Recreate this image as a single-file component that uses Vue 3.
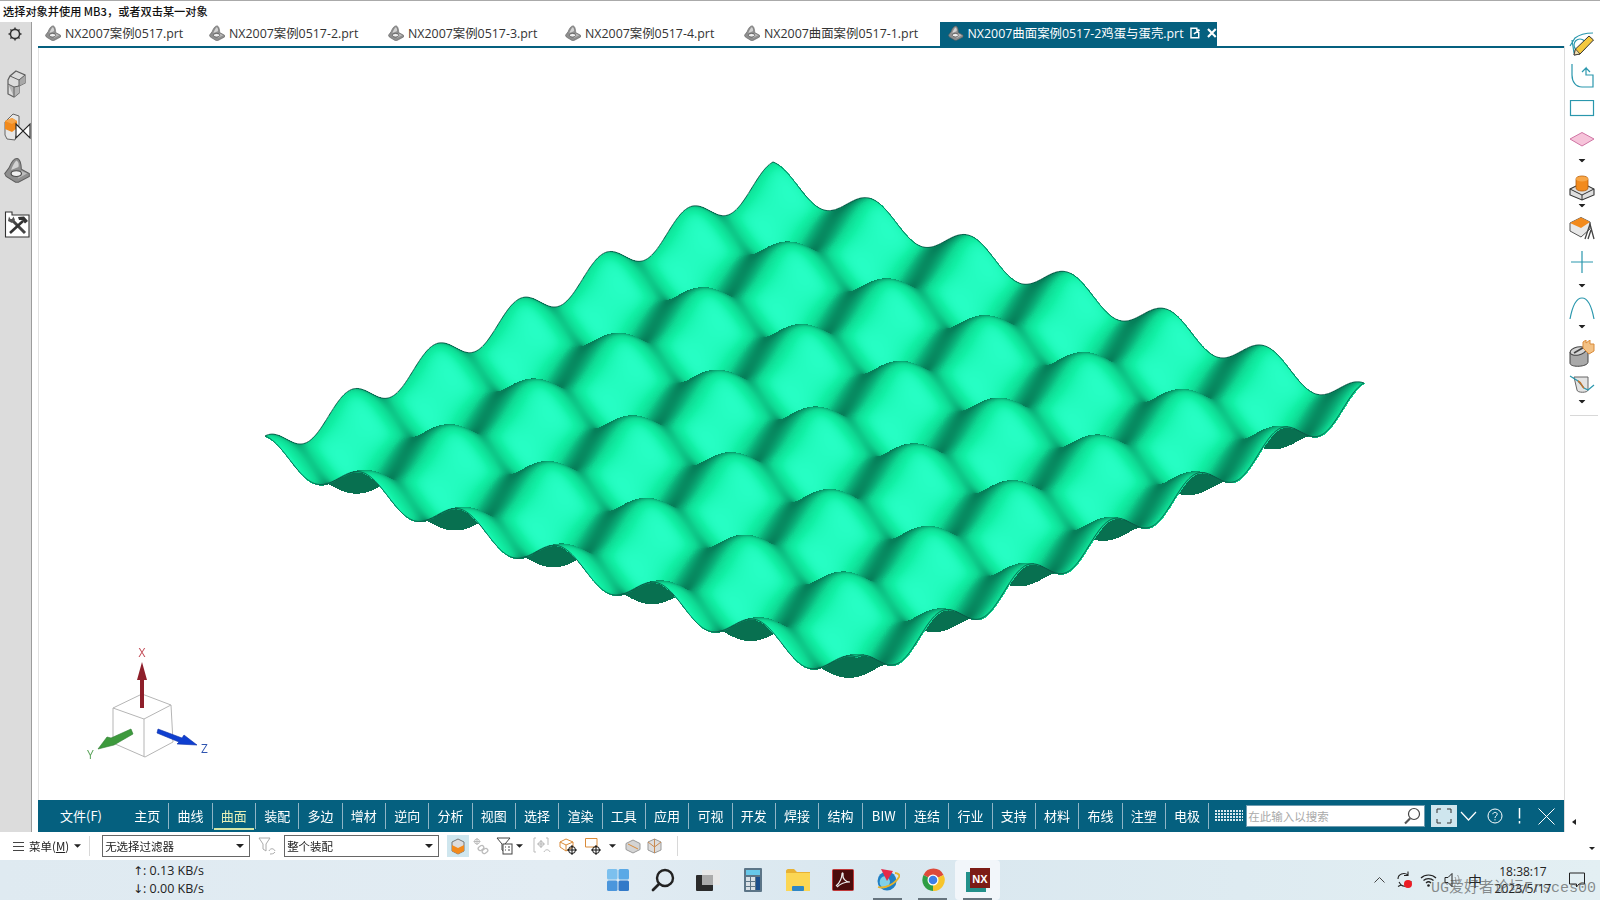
<script setup>
import { ref, onMounted } from 'vue'

const tabs = [
  { name: 'NX2007案例0517.prt', width: 164 },
  { name: 'NX2007案例0517-2.prt', width: 179 },
  { name: 'NX2007案例0517-3.prt', width: 177 },
  { name: 'NX2007案例0517-4.prt', width: 179 },
  { name: 'NX2007曲面案例0517-1.prt', width: 196 }
]
const ribbon = ['主页', '曲线', '曲面', '装配', '多边', '增材', '逆向', '分析', '视图', '选择', '渲染', '工具', '应用', '可视', '开发', '焊接', '结构', 'BIW', '连结', '行业', '支持', '材料', '布线', '注塑', '电极']

const surface = ref(null)

// colour ramp of the shaded surface, [light amount, r, g, b]
const ramp = [
  [0.2, 6, 128, 90],
  [0.48, 10, 178, 122],
  [0.66, 14, 216, 146],
  [0.86, 17, 240, 165],
  [1, 40, 255, 198]
]

function shade(lit) {
  if (lit <= ramp[0][0]) return ramp[0]
  for (let i = 1; i < ramp.length; i++) {
    if (lit <= ramp[i][0]) {
      const a = ramp[i - 1]
      const b = ramp[i]
      const m = (lit - a[0]) / (b[0] - a[0])
      return [0, a[1] + (b[1] - a[1]) * m, a[2] + (b[2] - a[2]) * m, a[3] + (b[3] - a[3]) * m]
    }
  }
  return ramp[ramp.length - 1]
}

// egg carton surface, s runs left corner -> far corner, t runs left corner -> near corner
function drawSurface() {
  const canvas = surface.value
  const W = canvas.width
  const H = canvas.height
  const ctx = canvas.getContext('2d')
  const img = ctx.createImageData(W, H)
  const px = img.data
  for (let i = 0; i < px.length; i += 4) {
    px[i] = 255; px[i + 1] = 255; px[i + 2] = 255; px[i + 3] = 255
  }

  const L = [265 - 39, 436 - 48]
  const E1 = [508, -274]
  const E2 = [591, 221]
  const amp = 14.5
  const side = 779
  const e1 = [508 / side, -274 / side, -524 / side]
  const e2 = [591 / side, 221 / side, 457 / side]
  const N = [-0.0155, -0.892, 0.451]
  const k = (12 * Math.PI) / side
  const ampW = amp / 0.892
  const steps = 2200
  const light = [0.27, -0.25, 0.93]

  const c = new Float32Array(steps + 1)
  const d = new Float32Array(steps + 1)
  for (let i = 0; i <= steps; i++) {
    const a = (12 * Math.PI * i) / steps
    c[i] = Math.cos(a)
    d[i] = -ampW * k * Math.sin(a)
  }

  for (let i = steps; i >= 0; i--) {
    const s = i / steps
    for (let j = 0; j <= steps; j++) {
      const t = j / steps
      const z = amp * (c[i] + c[j] - 2)
      const x = Math.round(L[0] + s * E1[0] + t * E2[0])
      const y = Math.round(L[1] + s * E1[1] + t * E2[1] - z)
      if (x < 0 || y < 0 || x >= W || y >= H) continue
      const ds = d[i]
      const dt = d[j]
      const nx = N[0] - ds * e1[0] - dt * e2[0]
      const ny = N[1] - ds * e1[1] - dt * e2[1]
      const nz = N[2] - ds * e1[2] - dt * e2[2]
      const len = Math.hypot(nx, ny, nz)
      const o = (y * W + x) * 4
      // facing away from the viewer: the underside
      if (nz < 0) {
        px[o] = 8; px[o + 1] = 112; px[o + 2] = 80
        continue
      }
      const col = shade((nx * light[0] + ny * light[1] + nz * light[2]) / len)
      px[o] = col[1]; px[o + 1] = col[2]; px[o + 2] = col[3]
    }
  }
  ctx.putImageData(img, 0, 0)

  // boundary curves
  ctx.strokeStyle = '#0a5a48'
  ctx.lineWidth = 1
  const edge = (ax, ay, bx, by) => {
    ctx.beginPath()
    for (let i = 0; i <= 720; i++) {
      const u = i / 720
      const s = ax + (bx - ax) * u
      const t = ay + (by - ay) * u
      const z = amp * (Math.cos(12 * Math.PI * s) + Math.cos(12 * Math.PI * t) - 2)
      const x = L[0] + s * E1[0] + t * E2[0]
      const y = L[1] + s * E1[1] + t * E2[1] - z
      if (i === 0) ctx.moveTo(x, y)
      else ctx.lineTo(x, y)
    }
    ctx.stroke()
  }
  edge(0, 0, 1, 0)
  edge(1, 0, 1, 1)
  edge(0, 0, 0, 1)
  edge(0, 1, 1, 1)
}

onMounted(drawSurface)
</script>

<template>
  <div class="screen">
    <svg width="0" height="0" class="defs">
      <symbol id="part" viewBox="0 0 18 18">
        <path d="M9 1 C7 1 5 3.500 3.500 7.500 L0.500 11.500 L1.500 13.500 L8 17.500 L10 17.500 L17.500 13.500 V11.500 L12 8.500 C12 5 11 1 9 1 Z" fill="#8f8f8f" stroke="#5e5e5e" stroke-width=".7" />
        <path d="M8.500 2.500 C7 4 5.500 7 5 9 L10 7 C10.500 5 10 3 8.500 2.500 Z" fill="#d2d2d2" />
        <path d="M12 9.500 L16 11.500 L9.500 15 L11 12 Z" fill="#bcbcbc" />
        <ellipse cx="8.500" cy="11.500" rx="3.600" ry="2" fill="#efefef" stroke="#4c4c4c" stroke-width=".8" />
      </symbol>
      <symbol id="caret" viewBox="0 0 8 4">
        <path d="M0 0 H8 L4 4 Z" fill="#222" />
      </symbol>
    </svg>

    <div class="status">选择对象并使用 MB3，或者双击某一对象</div>

    <div class="work">
      <aside class="rail">
        <svg class="gear" width="16" height="16" viewBox="0 0 16 16">
          <circle cx="8" cy="8" r="4.600" fill="none" stroke="#333" stroke-width="1.600" />
          <path d="M8 1.500V4M8 12v2.500M1.500 8H4M12 8h2.500M3.400 3.400l1.700 1.700M10.900 10.900l1.700 1.700M3.400 12.600l1.700-1.700M10.900 5.100l1.700-1.700" stroke="#333" stroke-width="1.400" />
        </svg>
        <svg class="rail-icon" width="24" height="28" viewBox="0 0 24 28">
          <path d="M11 1 L20 5 V13 L14 16 V23 L9 27 L3 24 V10 L5 6 Z" fill="#dcdcdc" stroke="#5e5e5e" stroke-width="1.200" />
          <path d="M5 6 L14 10 L20 5 V13 L14 16 V10 Z" fill="#a8a8a8" />
          <path d="M3 14 L9 17 L14 16 V23 L9 27 Z" fill="#b5b5b5" />
          <path d="M5 6 L14 10 L20 5 M14 10 V16 M3 14 L9 17 L14 16 M9 17 V27" fill="none" stroke="#5e5e5e" stroke-width="1" />
        </svg>
        <svg class="rail-icon" width="27" height="28" viewBox="0 0 27 28">
          <path d="M9 1 L15 3 V12 L11 27 L3 26 L1 22 V9 Z" fill="#e6e6e6" stroke="#666" />
          <path d="M1 8 L8 5 L13 8 V15 L8 19 L1 16 Z" fill="#f28a1c" />
          <path d="M1 8 L8 5 L13 8 L8 11 Z" fill="#f6a54a" />
          <path d="M12 11 L26 25 V11 L12 25 Z" fill="#fff" stroke="#222" stroke-width="1.100" />
        </svg>
        <svg class="rail-icon" width="26" height="28" viewBox="0 0 26 28">
          <use href="#part" />
        </svg>
        <svg class="rail-icon tools-icon" width="26" height="30" viewBox="0 0 26 30">
          <path d="M1.500 4 H8 V7 H25 V29 H1.500 Z" fill="#fff" stroke="#333" stroke-width="1.100" />
          <path d="M8 12 L21 25" stroke="#444" stroke-width="3" />
          <path d="M5 8.500 L4 13 L8 15 L11 12 L9.500 8.500 L8 11 L6.500 11 Z" fill="#555" />
          <path d="M19 13 L6 25" stroke="#333" stroke-width="2.600" />
          <path d="M14 9 L20 8.500 L24 13 L21 15.500 L18 12 L15 12 Z" fill="#333" />
        </svg>
      </aside>

      <main class="main">
        <div class="tabs">
          <div v-for="tab in tabs" :key="tab.name" class="tab" :style="{ width: tab.width + 'px' }">
            <svg width="16" height="16"><use href="#part" /></svg>
            <span>{{ tab.name }}</span>
          </div>
          <div class="tab active">
            <svg width="16" height="16"><use href="#part" /></svg>
            <span>NX2007曲面案例0517-2鸡蛋与蛋壳.prt</span>
            <svg class="doc" width="11" height="12" viewBox="0 0 11 12">
              <path d="M1 1 H7 V3 H9 V11 H1 Z M4 7 L10 3" fill="none" stroke="#fff" stroke-width="1.500" />
            </svg>
            <svg class="close" width="10" height="10" viewBox="0 0 10 10">
              <path d="M1 1 L9 9 M9 1 L1 9" stroke="#fff" stroke-width="2.200" />
            </svg>
          </div>
        </div>

        <div class="viewport">
          <canvas ref="surface" class="surface" width="1525" height="752"></canvas>
          <svg class="triad" width="160" height="140" viewBox="70 630 160 140">
            <g fill="none" stroke="#b5b5b5" stroke-width="1">
              <path d="M142 694 L113 708 L144 719 L171 705 Z" />
              <path d="M113 708 V743 L145 757 L173 742 L171 705 M144 719 V757" />
            </g>
            <path d="M140 708 V680 L137 680 L142 662 L147 680 L144 680 V708 Z" fill="#8e1f2a" />
            <path d="M131 729 L133 734 L114 745 L98 749 L107 737 L111 738 Z" fill="#3d9a3d" stroke="#2c7c30" stroke-width=".6" />
            <path d="M158 729 L182 738 L184 735 L197 745 L177 744 L179 742 L157 733 Z" fill="#0f3fd0" stroke="#0a2fa8" stroke-width=".6" />
            <text x="138.500" y="657" class="axis" fill="#c24a55">X</text>
            <text x="87" y="759" class="axis" fill="#5aa35a">Y</text>
            <text x="201" y="753" class="axis" fill="#2f55b0">Z</text>
          </svg>
        </div>

        <nav class="ribbon">
          <div class="file">文件(F)</div>
          <div v-for="item in ribbon" :key="item" class="rib" :class="{ on: item === '曲面' }"><span>{{ item }}</span></div>
          <svg class="grip" width="28" height="12" viewBox="0 0 28 12">
            <pattern id="dots" width="3" height="3" patternUnits="userSpaceOnUse"><rect width="2" height="2" fill="#d8e8ee" /></pattern>
            <rect width="28" height="12" fill="url(#dots)" />
          </svg>
          <div class="search">
            <span>在此输入以搜索</span>
            <svg width="18" height="18" viewBox="0 0 18 18">
              <circle cx="11" cy="7" r="5.500" fill="#fff" stroke="#444" stroke-width="1.200" />
              <path d="M7 11.500 L2 16.500" stroke="#555" stroke-width="2.200" />
            </svg>
          </div>
          <div class="full">
            <svg width="16" height="16" viewBox="0 0 16 16">
              <path d="M1 5V1H5M11 1H15V5M15 11V15H11M5 15H1V11" fill="none" stroke="#333" stroke-width="1" />
            </svg>
          </div>
          <svg class="rb-chevron" width="17" height="12" viewBox="0 0 17 12"><path d="M1 2 L8.500 10 L16 2" fill="none" stroke="#fff" stroke-width="1.200" /></svg>
          <svg class="rb-help" width="16" height="16" viewBox="0 0 16 16">
            <circle cx="8" cy="8" r="7" fill="none" stroke="#fff" stroke-width="1" />
            <path d="M5.800 6.200 C6 3.800 10.200 3.800 10.200 6.200 C10.200 8 8 7.800 8 10 M8 11.200 V12.400" fill="none" stroke="#fff" stroke-width="1" />
          </svg>
          <svg class="rb-warn" width="3" height="16" viewBox="0 0 3 16"><path d="M1.500 0 V10.500 M1.500 13 V15.500" stroke="#fff" stroke-width="1.500" /></svg>
          <svg class="rb-close" width="17" height="17" viewBox="0 0 17 17"><path d="M0.500 0.500 L16.500 16.500 M16.500 0.500 L0.500 16.500" stroke="#fff" stroke-width="1" /></svg>
        </nav>
      </main>

      <aside class="tools">
        <svg width="36" height="31" viewBox="0 0 36 31">
          <path d="M6 14 L11 6 C16 2 22 1 29 1 M8 8 L10 21 H15" fill="none" stroke="#2a97ad" stroke-width="1.200" />
          <circle cx="16" cy="13" r="6" fill="none" stroke="#2a97ad" stroke-width="1.200" />
          <path d="M10 23 L11.500 17 L25 4 L29.500 8 L16 22 Z" fill="#f4c83e" stroke="#333" stroke-width="1" />
          <path d="M10 23 L11.500 17 L16 22 Z" fill="#f3e0b0" stroke="#333" stroke-width=".8" />
        </svg>
        <svg width="36" height="37" viewBox="0 0 36 37">
          <path d="M8 1 V12 C8 19 12 24 18 24 H29 V12 H22 V5 L18 9 M22 5 L26 9" fill="none" stroke="#2a97ad" stroke-width="1.200" />
        </svg>
        <svg width="36" height="32" viewBox="0 0 36 32"><rect x="6.500" y="0.500" width="23" height="15" fill="none" stroke="#2a97ad" stroke-width="1.200" /></svg>
        <svg width="36" height="43" viewBox="0 0 36 43">
          <path d="M6 7 L18 0.500 L30 7 L18 14 Z" fill="#f6c4da" stroke="#d074a4" />
          <use href="#caret" x="14.500" y="27" width="7" height="3.500" />
        </svg>
        <svg width="36" height="42" viewBox="0 0 36 42">
          <path d="M6 14 L18 8 L30 14 V20 L18 25 L6 20 Z" fill="#dedede" stroke="#333" stroke-width="1.100" />
          <path d="M6 14 L18 20 L30 14 M18 20 V25" fill="none" stroke="#333" />
          <path d="M12 4 C12 0 24 0 24 4 V13 C24 17 12 17 12 13 Z" fill="#f28a1c" stroke="#b05e10" stroke-width=".8" />
          <ellipse cx="18" cy="4" rx="6" ry="2.500" fill="#f8a748" />
          <use href="#caret" x="14.500" y="29" width="7" height="3.500" />
        </svg>
        <svg width="36" height="25" viewBox="0 0 36 25">
          <path d="M6 6 L17 0.500 L26 5 V12 L17 20 L6 14 Z" fill="#e8e8e8" stroke="#555" />
          <path d="M6 6 L17 0.500 L26 5 L17 11 Z" fill="#f28a1c" />
          <path d="M21 22 L26 7 L30 22 M24 22 L27 13" fill="none" stroke="#444" stroke-width="1.300" />
        </svg>
        <svg width="36" height="55" viewBox="0 0 36 55">
          <path d="M7 20 H29 M18 9 V31" stroke="#2a97ad" stroke-width="1.200" />
          <use href="#caret" x="14.500" y="42" width="7" height="3.500" />
        </svg>
        <svg width="36" height="43" viewBox="0 0 36 43">
          <path d="M6 22 C9 6 14 1 18 1 C22 1 27 6 30 22" fill="none" stroke="#2a97ad" stroke-width="1.200" />
          <use href="#caret" x="14.500" y="28" width="7" height="3.500" />
        </svg>
        <svg width="36" height="35" viewBox="0 0 36 35">
          <path d="M6 12 L24 8 V22 C24 27 6 28 6 23 Z" fill="#a9a9a9" stroke="#444" />
          <ellipse cx="14" cy="11" rx="8" ry="4" transform="rotate(-12 14 11)" fill="#d5d5d5" stroke="#444" />
          <path d="M10 13 L22 6" stroke="#444" stroke-width="1.500" />
          <path d="M19 2 L22 0 V3 L26 0 V4 H30 V11 L25 14 L19 8 Z" fill="#f3c184" stroke="#d98b3a" />
        </svg>
        <svg width="36" height="40" viewBox="0 0 36 40">
          <path d="M10 2 H24 L24 15 C24 18 13 18 13 15 Z" fill="#e3e3e3" stroke="#666" />
          <path d="M6 1 L14 6 L20 13 L24 15 L30 10" fill="none" stroke="#2a97ad" stroke-width="1.200" />
          <path d="M14 6 C18 8 18 12 20 13" fill="none" stroke="#c0702a" stroke-width="1.500" />
          <use href="#caret" x="14.500" y="25" width="7" height="3.500" />
        </svg>
        <div class="tools-line"></div>
        <div class="collapse"></div>
      </aside>
    </div>

    <div class="selbar">
      <svg class="burger" width="11" height="9" viewBox="0 0 11 9"><path d="M0 .5H11M0 4.500H11M0 8.500H11" stroke="#444" /></svg>
      <span class="menu">菜单(<u>M</u>)</span>
      <svg class="mini" width="7" height="4"><use href="#caret" /></svg>
      <i class="vsep first"></i>
      <div class="combo wide"><span>无选择过滤器</span><svg width="8" height="4"><use href="#caret" /></svg></div>
      <svg class="filter" width="20" height="18" viewBox="0 0 20 18">
        <path d="M1 1 H12 L8 7 V14 L5 12 V7 Z" fill="none" stroke="#aaa" />
        <path d="M11 14 C12 11 16 11 17 14 M12 17 C13 17 16 17 17 15" fill="none" stroke="#aaa" />
      </svg>
      <div class="combo"><span>整个装配</span><svg width="8" height="4"><use href="#caret" /></svg></div>
      <div class="hot">
        <svg width="14" height="17" viewBox="0 0 14 17">
          <path d="M7 1 L13 4 V13 L7 16 L1 13 V4 Z" fill="#ddd" stroke="#777" />
          <path d="M1 7 L7 10 L13 7 V13 L7 16 L1 13 Z" fill="#f28a1c" />
        </svg>
      </div>
      <svg class="sel-icon after-hot" width="18" height="18" viewBox="0 0 18 18">
        <path d="M5 1V8M1.500 4.500H8.500" stroke="#bbb" />
        <circle cx="5" cy="4.500" r="2.500" fill="none" stroke="#bbb" />
        <rect x="6" y="9" width="6" height="4" rx="2" transform="rotate(-35 9 11)" fill="none" stroke="#bbb" stroke-width="1.300" />
        <rect x="10" y="12" width="6" height="4" rx="2" transform="rotate(-35 13 14)" fill="none" stroke="#bbb" stroke-width="1.300" />
      </svg>
      <svg class="sel-icon" width="17" height="18" viewBox="0 0 17 18">
        <path d="M1 1 H14 L9 7 V15 L6 13 V7 Z" fill="none" stroke="#444" />
        <rect x="7" y="7" width="9" height="10" fill="#fff" stroke="#444" />
        <path d="M9 10h1M12 10h2M9 13h1M12 13h2" stroke="#444" />
      </svg>
      <svg class="mini caret-a" width="7" height="4"><use href="#caret" /></svg>
      <svg class="sel-icon disabled" width="18" height="18" viewBox="0 0 18 18">
        <path d="M3 1 H1 V15 H3 M13 1 H15 V8" fill="none" stroke="#bbb" />
        <path d="M8 3V11M4 7H12" stroke="#bbb" stroke-width="1.200" />
        <circle cx="8" cy="7" r="2.500" fill="none" stroke="#bbb" />
        <path d="M11 15 C12 12 16 12 17 15" fill="none" stroke="#bbb" />
      </svg>
      <svg class="sel-icon tight" width="19" height="18" viewBox="0 0 19 18">
        <path d="M1 5 L7 2 L14 5 V10 L7 14 L1 10 Z M1 5 L7 8 L14 5 M7 8 V14" fill="#fff" stroke="#d98b3a" />
        <circle cx="13" cy="13" r="3.500" fill="none" stroke="#111" />
        <path d="M13 8V18M8 13H18" stroke="#111" />
      </svg>
      <svg class="sel-icon" width="19" height="18" viewBox="0 0 19 18">
        <path d="M1.500 1.500 H13 V10 H1.500 Z" fill="none" stroke="#d98b3a" />
        <circle cx="12" cy="13" r="3.500" fill="none" stroke="#111" />
        <path d="M12 8V18M7 13H17" stroke="#111" />
      </svg>
      <svg class="mini caret-b" width="7" height="4"><use href="#caret" /></svg>
      <svg class="sel-icon wide-gap" width="16" height="15" viewBox="0 0 16 15">
        <path d="M8 1 L15 4.500 V10.500 L8 14 L1 10.500 V4.500 Z" fill="#d4d4d4" stroke="#999" />
        <path d="M3 5 L13 10" stroke="#d98b3a" />
      </svg>
      <svg class="sel-icon" width="15" height="16" viewBox="0 0 15 16">
        <path d="M7.500 1 L14 4 V12 L7.500 15 L1 12 V4 Z" fill="#ddd" stroke="#999" />
        <path d="M7.500 1 V9 M1 4 L7.500 9 L14 4 M7.500 9 V15" fill="none" stroke="#c98a50" />
      </svg>
      <i class="vsep last"></i>
      <div class="drop-end"></div>
    </div>

    <footer class="taskbar">
      <div class="net">
        <div><span class="arrow">↑</span>: 0.13 KB/s</div>
        <div><span class="arrow">↓</span>: 0.00 KB/s</div>
      </div>
      <div class="apps">
        <div class="app">
          <svg width="22" height="22" viewBox="0 0 22 22">
            <rect width="10.500" height="10.500" rx="1.500" fill="#7cc0ee" />
            <rect x="11.500" width="10.500" height="10.500" rx="1.500" fill="#5aa9e6" />
            <rect y="11.500" width="10.500" height="10.500" rx="1.500" fill="#4b96dc" />
            <rect x="11.500" y="11.500" width="10.500" height="10.500" rx="1.500" fill="#3279c8" />
          </svg>
        </div>
        <div class="app">
          <svg width="24" height="24" viewBox="0 0 24 24">
            <circle cx="14" cy="10" r="8" fill="none" stroke="#222" stroke-width="2.400" />
            <path d="M8 16 L2 22" stroke="#222" stroke-width="2.800" stroke-linecap="round" />
          </svg>
        </div>
        <div class="app">
          <svg width="24" height="22" viewBox="0 0 24 22">
            <rect x="6" y="1" width="18" height="15" fill="#e8e8e8" />
            <rect width="17" height="16" y="6" fill="#2b2b2b" rx="1" />
            <rect x="6" y="6" width="11" height="10" fill="#ababab" />
          </svg>
        </div>
        <div class="app">
          <svg width="18" height="24" viewBox="0 0 18 24">
            <rect width="18" height="24" rx="1" fill="#5c7587" />
            <rect x="2" y="2" width="14" height="5" fill="#67c8ea" />
            <path d="M2 9h4v4H2zM7 9h4v4H7zM2 14h4v4H2zM7 14h4v4H7zM2 19h4v3H2zM7 19h4v3H7z" fill="#d8e0e6" />
            <rect x="12" y="9" width="4" height="13" fill="#1c4f8c" />
          </svg>
        </div>
        <div class="app">
          <svg width="24" height="22" viewBox="0 0 24 22">
            <path d="M0 2 C0 1 1 0 2 0 H8 L11 3 H24 V22 H0 Z" fill="#e8b234" />
            <rect y="4" width="24" height="18" fill="#fbd654" />
            <rect x="6" y="17" width="12" height="5" rx="1" fill="#2e86c5" />
          </svg>
        </div>
        <div class="app">
          <svg width="22" height="22" viewBox="0 0 22 22">
            <rect x="0.500" y="0.500" width="21" height="21" rx="1" fill="#4a0c0c" stroke="#c23a3a" />
            <path d="M4 17 C8 14 10 8 10 5 C10 3 11.500 4 11 6 C10.500 9 13 13 18 13 C14 13 9 14 5 18" fill="none" stroke="#eee" stroke-width="1.200" />
          </svg>
        </div>
        <div class="app">
          <svg width="24" height="24" viewBox="0 0 24 24">
            <circle cx="11" cy="13" r="9.500" fill="#1f7fc4" />
            <path d="M4 12 C7 6 12 8 14 13 C14 18 9 21 7 20 C4 18 3 15 4 12 Z" fill="#7fd0e8" />
            <path d="M2 19 C9 21 19 16 23 9 C24 7 22 5 19 5" fill="none" stroke="#e5b32c" stroke-width="1.800" />
            <path d="M5 1 L17 3 L11 13 Z" fill="#e5294a" />
          </svg>
        </div>
        <div class="app">
          <svg width="24" height="24" viewBox="0 0 24 24">
            <path d="M12 12 L2.500 7 A11 11 0 0 1 22.500 7 Z" fill="#dd4a3a" />
            <path d="M12 12 L22.500 7 A11 11 0 0 1 12 23 Z" fill="#f7c52b" />
            <path d="M12 12 L12 23 A11 11 0 0 1 2.500 7 Z" fill="#2f9e44" />
            <circle cx="12" cy="12" r="5.500" fill="#fff" />
            <circle cx="12" cy="12" r="4.300" fill="#3f7fe6" />
          </svg>
        </div>
        <div class="app nx">
          <svg width="24" height="24" viewBox="0 0 24 24">
            <rect y="4" width="20" height="20" fill="#23908a" />
            <rect x="4" width="20" height="20" fill="#7c1c16" />
            <text x="14" y="15" class="nx-label">NX</text>
          </svg>
        </div>
      </div>
      <div class="tray">
        <svg class="caret-up" width="11" height="6" viewBox="0 0 11 6"><path d="M.5 5.500 L5.500 .5 L10.500 5.500" fill="none" stroke="#444" /></svg>
        <svg width="18" height="18" viewBox="0 0 18 18">
          <path d="M2 8 C2 3 8 1 12 4 M12 0.500 V4.500 H8 M15 10 C15 14 9 17 5 14 M3 11 L5 14 L2 15.500" fill="none" stroke="#222" stroke-width="1.100" />
          <circle cx="12" cy="13" r="4" fill="#ec1c24" />
        </svg>
        <svg width="17" height="14" viewBox="0 0 17 14">
          <path d="M1 5 C5 1 12 1 16 5 M3.500 7.500 C6 5 11 5 13.500 7.500 M6 10 C7.500 8.500 9.500 8.500 11 10" fill="none" stroke="#222" stroke-width="1.200" />
          <circle cx="8.500" cy="12.500" r="1.300" fill="#222" />
        </svg>
        <svg class="speaker" width="17" height="16" viewBox="0 0 17 16">
          <path d="M1 5.500 H4 L8 1.500 V14.500 L4 10.500 H1 Z" fill="none" stroke="#222" />
          <path d="M11 5 C12 7 12 9 11 11 M13.500 3 C15.500 6 15.500 10 13.500 13" fill="none" stroke="#999" />
        </svg>
        <span class="ime">中</span>
        <div class="clock">
          <div>18:38:17</div>
          <div>2023/5/17</div>
        </div>
        <svg class="notify" width="16" height="16" viewBox="0 0 16 16"><path d="M.5 1 H15.500 V12 H10 L7.500 15 V12 H.5 Z" fill="none" stroke="#222" /></svg>
      </div>
      <div class="watermark">UG爱好者论坛Frsces00</div>
    </footer>
  </div>
</template>

<style>
html, body { margin: 0; padding: 0; background: #fff; }
</style>

<style scoped>
.screen {
  position: relative;
  width: 1600px;
  height: 900px;
  overflow: hidden;
  display: flex;
  flex-direction: column;
  background: #fff;
  font-family: "Open Sans", "Noto Sans CJK SC", sans-serif;
  color: #222;
}
.defs { position: absolute; }
.status {
  height: 21px;
  line-height: 21px;
  padding-left: 3px;
  border-top: 1px solid #aaa;
  font-family: "Noto Sans CJK SC", sans-serif;
  font-size: 11.2px;
  font-weight: 500;
  color: #111;
  flex: none;
}

.work { flex: 1; min-height: 0; display: flex; }

.rail {
  width: 31px;
  flex: none;
  background: #dcdcdc;
  border-right: 1px solid #9c9c9c;
  display: flex;
  flex-direction: column;
  align-items: center;
  padding-top: 4px;
  box-sizing: content-box;
}
.gear { margin-bottom: 28px; margin-right: 2px; }
.rail-icon { margin-bottom: 15px; margin-left: 3px; }
.tools-icon { margin-top: 9px; }

.main {
  margin-left: 6px;
  width: 1526px;
  flex: none;
  display: flex;
  flex-direction: column;
}

.tabs {
  height: 24px;
  display: flex;
  align-items: stretch;
  border-bottom: 2px solid #05607f;
  font-size: 12.4px;
  flex: none;
  padding-left: 7px;
}
.tab {
  display: flex;
  align-items: center;
  gap: 4px;
  color: #333;
  box-sizing: border-box;
  white-space: nowrap;
  flex: none;
  padding-bottom: 2px;
}
.tab.active {
  background: #05607f;
  color: #fff;
  width: 277px;
  padding-left: 8px;
}
.doc { margin-left: 2px; }
.close { margin-left: 3px; }

.viewport {
  position: relative;
  flex: 1;
  min-height: 0;
  border-left: 1px solid #e2e2e2;
}
.surface { display: block; background: #fff; }
.triad { position: absolute; left: 31px; top: 582px; }
.axis { font-family: "Open Sans", sans-serif; font-size: 12px; }

.ribbon {
  height: 32px;
  flex: none;
  display: flex;
  align-items: center;
  background: #05607f;
  color: #fff;
  font-family: "Noto Sans CJK SC", sans-serif;
  font-size: 13px;
}
.file { width: 88px; padding: 0 0 2px 22px; box-sizing: border-box; flex: none; }
.rib {
  width: 43.33px;
  height: 26px;
  flex: none;
  box-sizing: border-box;
  display: flex;
  align-items: center;
  justify-content: center;
  padding-bottom: 2px;
  border-right: 1px solid #8fb5c6;
  position: relative;
}
.rib:last-of-type { border-right: none; }
.rib.on { color: #e6efb8; }
.rib.on::after {
  content: '';
  position: absolute;
  left: 1px;
  right: 1px;
  bottom: -1px;
  height: 2px;
  background: #d3e6a8;
}
.grip { margin-left: 6px; flex: none; }
.search {
  margin-left: 3px;
  width: 179px;
  height: 22px;
  box-sizing: border-box;
  background: #fff;
  border: 1px solid #6f9cb0;
  display: flex;
  align-items: center;
  justify-content: space-between;
  padding: 0 3px 0 1px;
  color: #aaa;
  font-size: 11.5px;
  flex: none;
}
.full {
  margin-left: 6px;
  width: 26px;
  height: 22px;
  background: #cfe6ee;
  display: flex;
  align-items: center;
  justify-content: center;
  flex: none;
}
.rb-chevron { margin-left: 3px; flex: none; }
.rb-help { margin-left: 10px; flex: none; }
.rb-warn { margin-left: 15px; flex: none; }
.rb-close { margin-left: 17px; flex: none; }

.tools {
  flex: 1;
  min-width: 0;
  margin-top: 24px;
  border-left: 1px solid #dcdcdc;
  display: flex;
  flex-direction: column;
  position: relative;
}
.tools svg { display: block; flex: none; margin-left: -1px; }
.tools > svg:first-child { margin-top: -14px; }
.tools-line { margin: 0 2px 0 5px; height: 1px; background: #d8d8d8; flex: none; }
.collapse {
  position: absolute;
  left: 7px;
  bottom: 7px;
  width: 0;
  height: 0;
  border-top: 3px solid transparent;
  border-bottom: 3px solid transparent;
  border-right: 4px solid #222;
}

.selbar {
  height: 28px;
  flex: none;
  display: flex;
  align-items: center;
  font-family: "Noto Sans CJK SC", sans-serif;
  font-size: 11.5px;
  color: #222;
  padding-left: 13px;
  position: relative;
}
.menu { margin-left: 5px; }
.mini { margin-left: 5px; flex: none; }
.vsep { width: 1px; height: 20px; background: #d8d8d8; flex: none; }
.vsep.first { margin: 0 12px 0 8px; }
.vsep.last { margin-left: 15px; }
.combo {
  width: 155px;
  height: 22px;
  box-sizing: border-box;
  border: 1px solid #666;
  display: flex;
  align-items: center;
  justify-content: space-between;
  padding: 0 5px 0 2px;
  flex: none;
}
.combo.wide { width: 148px; }
.filter { margin: 0 6px 0 8px; flex: none; }
.hot {
  margin-left: 8px;
  width: 22px;
  height: 22px;
  background: #cfe6ee;
  display: flex;
  align-items: center;
  justify-content: center;
  flex: none;
}
.sel-icon { margin-left: 6px; flex: none; }
.sel-icon.after-hot { margin-left: 3px; }
.sel-icon.tight { margin-left: 8px; }
.caret-a { margin-left: 3px; }
.caret-b { margin-left: 6px; }
.sel-icon.disabled { margin-left: 10px; }
.sel-icon.wide-gap { margin-left: 9px; }
.drop-end {
  position: absolute;
  right: 5px;
  bottom: 10px;
  border-left: 3px solid transparent;
  border-right: 3px solid transparent;
  border-top: 3px solid #222;
}

.taskbar {
  height: 40px;
  flex: none;
  position: relative;
  display: flex;
  align-items: center;
  background: linear-gradient(90deg, #dfeaf1, #e2ecf3 35%, #d9e7ef 55%, #e3eff3);
}
.net {
  width: 595px;
  padding-left: 133px;
  box-sizing: border-box;
  font-family: "Open Sans", sans-serif;
  font-size: 12.5px;
  line-height: 17px;
  color: #222;
  flex: none;
}
.arrow { font-family: "DejaVu Sans", sans-serif; font-size: 12px; }
.apps { display: flex; flex: none; }
.app {
  width: 45px;
  height: 40px;
  display: flex;
  align-items: center;
  justify-content: center;
  position: relative;
}
.app:nth-child(7)::after,
.app:nth-child(8)::after,
.app.nx::after {
  content: '';
  position: absolute;
  left: 8px;
  right: 8px;
  bottom: 0;
  height: 2px;
  background: #66747e;
}
.app.nx { background: #f2f6fa; border-radius: 4px; }
.nx-label {
  font-family: "Liberation Sans", sans-serif;
  font-size: 11px;
  font-weight: 700;
  fill: #fff;
  text-anchor: middle;
}
.tray {
  margin-left: auto;
  display: flex;
  align-items: center;
  gap: 6px;
  padding-right: 15px;
}
.caret-up { margin-right: 5px; }
.speaker { margin-left: 1px; }
.ime { font-family: "Noto Sans CJK SC", sans-serif; font-size: 14px; color: #222; margin-left: 1px; }
.clock {
  font-family: "Open Sans", sans-serif;
  font-size: 12px;
  line-height: 17px;
  text-align: center;
  width: 66px;
  margin-left: 2px;
}
.notify { margin-left: 7px; }
.watermark {
  position: absolute;
  left: 1431px;
  bottom: 2px;
  font-family: "Liberation Mono", "Noto Sans CJK SC", monospace;
  font-size: 15px;
  line-height: 18px;
  color: rgba(70, 70, 70, 0.6);
  white-space: nowrap;
}
</style>
